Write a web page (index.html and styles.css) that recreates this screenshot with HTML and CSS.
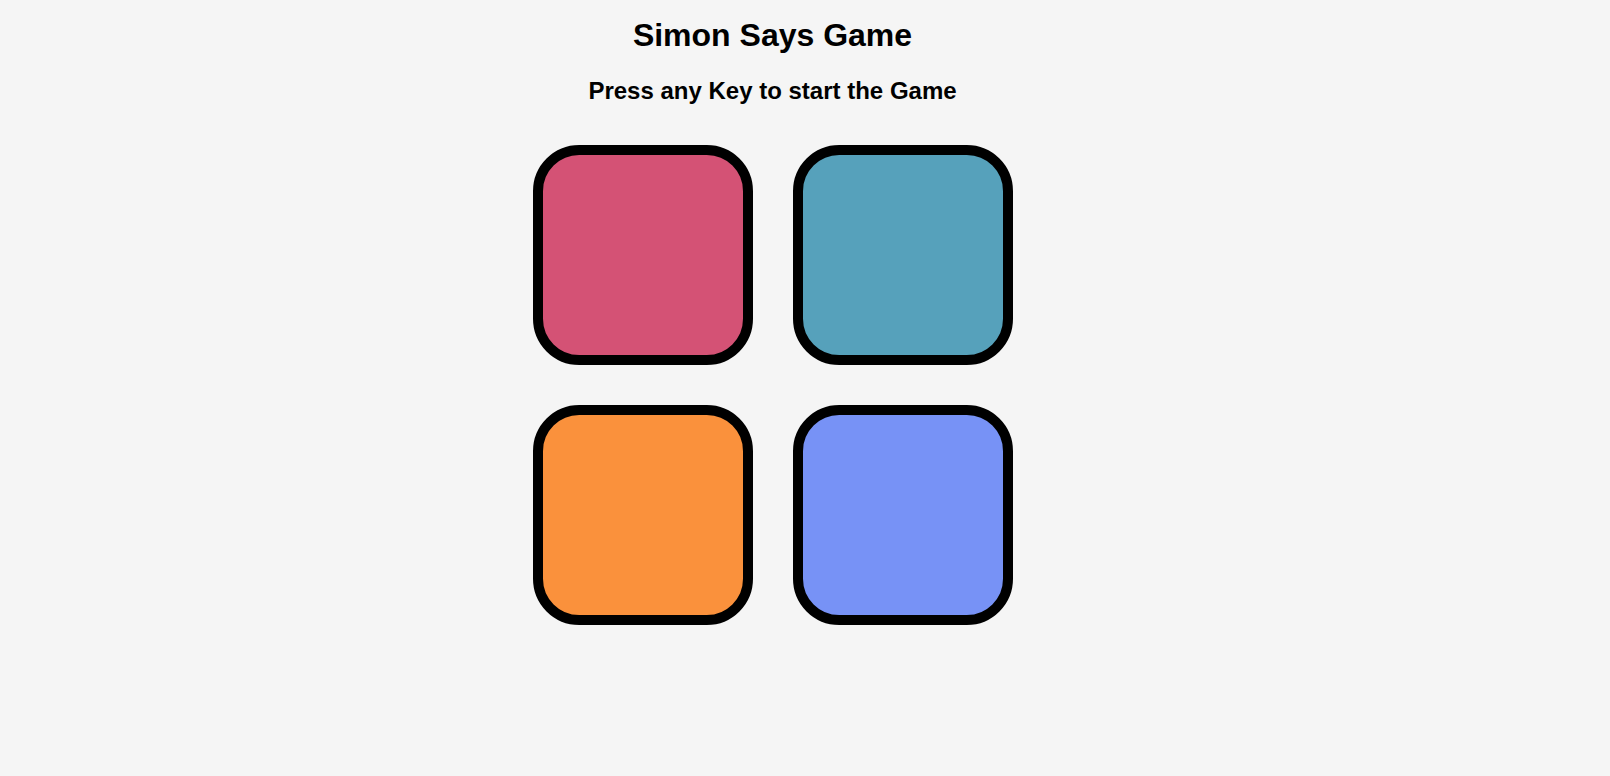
FILE: index.html
```html
<!DOCTYPE html>
<html lang="en">
<head>
<meta charset="UTF-8">
<title>Simon Says Game</title>
<link rel="stylesheet" href="styles.css">
</head>
<body>
<main class="game">
  <h1 class="title">Simon Says Game</h1>
  <h2 class="status">Press any Key to start the Game</h2>
  <div class="board">
    <div class="btn red"></div>
    <div class="btn green"></div>
    <div class="btn yellow"></div>
    <div class="btn purple"></div>
  </div>
</main>
</body>
</html>
```
FILE: styles.css
```css
html, body {
  margin: 0;
  padding: 0;
  background: #f5f5f5;
}
body {
  font-family: "Liberation Sans", Arial, sans-serif;
  color: #000;
}
.game {
  width: 1545px;
  text-align: center;
  display: flex;
  flex-direction: column;
  align-items: center;
}
.title {
  font-size: 32px;
  font-weight: bold;
  margin: 17px 0 0;
  line-height: normal;
}
.status {
  font-size: 24px;
  font-weight: bold;
  margin: 23px 0 0;
  line-height: normal;
}
.board {
  margin-top: 40px;
  display: grid;
  grid-template-columns: 220px 220px;
  gap: 40px;
}
.btn {
  width: 200px;
  height: 200px;
  border: 10px solid #000;
  border-radius: 21%;
}
.red { background: #d45275; }
.green { background: #56a1bb; }
.yellow { background: #fa913c; }
.purple { background: #7792f6; }
```
